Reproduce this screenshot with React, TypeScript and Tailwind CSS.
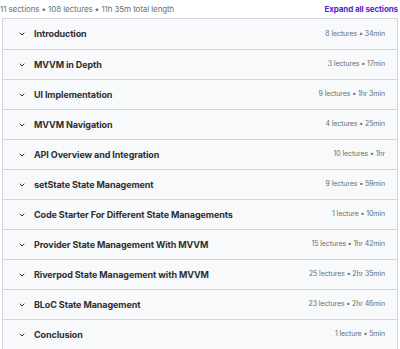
const sections = [
  { title: 'Introduction', meta: '8 lectures • 34min' },
  { title: 'MVVM in Depth', meta: '3 lectures • 17min' },
  { title: 'UI Implementation', meta: '9 lectures • 1hr 3min' },
  { title: 'MVVM Navigation', meta: '4 lectures • 25min' },
  { title: 'API Overview and Integration', meta: '10 lectures • 1hr' },
  { title: 'setState State Management', meta: '9 lectures • 59min' },
  { title: 'Code Starter For Different State Managements', meta: '1 lecture • 10min' },
  { title: 'Provider State Management With MVVM', meta: '15 lectures • 1hr 42min' },
  { title: 'Riverpod State Management with MVVM', meta: '25 lectures • 2hr 35min' },
  { title: 'BLoC State Management', meta: '23 lectures • 2hr 46min' },
  { title: 'Conclusion', meta: '1 lecture • 5min' },
];

function Chevron() {
  return (
    <svg width="8" height="8" viewBox="0 0 24 24" fill="none" stroke="#2d2f31" strokeWidth="3" strokeLinecap="round" strokeLinejoin="round">
      <path d="M6 9l6 6 6-6" />
    </svg>
  );
}

export default function App() {
  return (
    <div className="w-[400px] h-[349px] bg-white overflow-hidden font-['Inter',sans-serif]">
      <div className="flex items-center justify-between h-[18px] pr-[2px]">
        <span className="text-[8px] text-[#6a6f73] tracking-[-0.1px]">11 sections • 108 lectures • 11h 35m total length</span>
        <span className="text-[8px] font-bold text-[#5624d0] tracking-[-0.1px]">Expand all sections</span>
      </div>
      <div className="mx-[2px] border border-[#d1d7dc]">
        {sections.map((s, i) => (
          <div
            key={s.title}
            className={`flex items-center h-[30px] bg-[#f7f9fa] pl-[15px] pr-[12px] ${i > 0 ? 'border-t border-[#d1d7dc]' : ''}`}
          >
            <Chevron />
            <span className="ml-[8px] text-[9px] font-bold text-[#2d2f31] tracking-[-0.1px]">{s.title}</span>
            <span className="ml-auto text-[7px] text-[#6a6f73] tracking-[-0.1px]">{s.meta}</span>
          </div>
        ))}
      </div>
    </div>
  );
}
